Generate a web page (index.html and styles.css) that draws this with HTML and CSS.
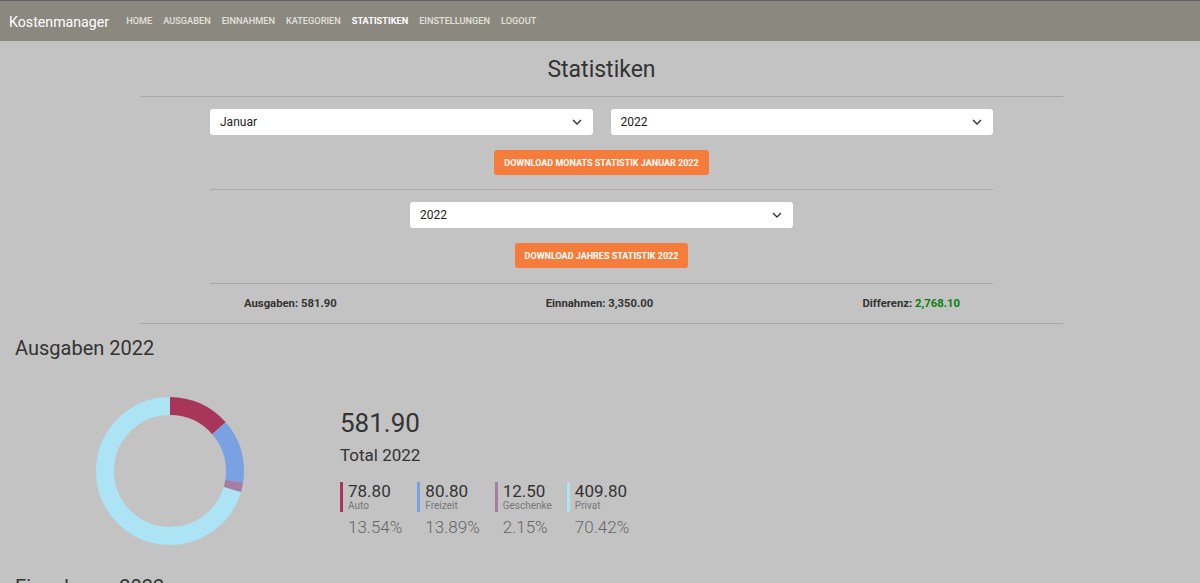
FILE: index.html
```html
<!DOCTYPE html>
<html lang="de">
<head>
<meta charset="utf-8">
<title>Kostenmanager - Statistiken</title>
<link rel="stylesheet" href="styles.css">
</head>
<body>
<nav class="navbar">
  <a class="brand" href="#">Kostenmanager</a>
  <ul class="nav">
    <li><a href="#">Home</a></li>
    <li><a href="#">Ausgaben</a></li>
    <li><a href="#">Einnahmen</a></li>
    <li><a href="#">Kategorien</a></li>
    <li><a class="active" href="#">Statistiken</a></li>
    <li><a href="#">Einstellungen</a></li>
    <li><a href="#">Logout</a></li>
  </ul>
</nav>
<main>
  <div class="container">
    <h1 class="title">Statistiken</h1>
    <div class="rule"></div>
    <div class="inner">
      <div class="select-pair">
        <div class="select"><span>Januar</span><svg class="chev" width="10" height="6" viewBox="0 0 10 6"><path d="M1 1l4 4 4-4" fill="none" stroke="#333" stroke-width="1.4"/></svg></div>
        <div class="select"><span>2022</span><svg class="chev" width="10" height="6" viewBox="0 0 10 6"><path d="M1 1l4 4 4-4" fill="none" stroke="#333" stroke-width="1.4"/></svg></div>
      </div>
      <div class="btn-row"><button class="btn">Download Monats Statistik Januar 2022</button></div>
      <div class="rule gap-top"></div>
      <div class="select-single">
        <div class="select"><span>2022</span><svg class="chev" width="10" height="6" viewBox="0 0 10 6"><path d="M1 1l4 4 4-4" fill="none" stroke="#333" stroke-width="1.4"/></svg></div>
      </div>
      <div class="btn-row"><button class="btn">Download Jahres Statistik 2022</button></div>
      <div class="rule gap-top2"></div>
      <div class="totals">
        <span>Ausgaben: 581.90</span>
        <span>Einnahmen: 3,350.00</span>
        <span>Differenz: <em class="pos">2,768.10</em></span>
      </div>
    </div>
    <div class="rule"></div>
  </div>

  <section class="chart-section">
    <h2 class="section-title">Ausgaben 2022</h2>
    <div class="chart-row">
      <svg class="donut" width="148" height="148" viewBox="0 0 148 148">
        <g transform="rotate(-90 74 74)" fill="none" stroke-width="18">
          <circle cx="74" cy="74" r="65" stroke="#a8365a" stroke-dasharray="55.30 353.11" stroke-dashoffset="0"/>
          <circle cx="74" cy="74" r="65" stroke="#7aa2e2" stroke-dasharray="56.73 351.68" stroke-dashoffset="-55.30"/>
          <circle cx="74" cy="74" r="65" stroke="#a47ea7" stroke-dasharray="8.78 399.63" stroke-dashoffset="-112.03"/>
          <circle cx="74" cy="74" r="65" stroke="#ace3f5" stroke-dasharray="287.60 120.81" stroke-dashoffset="-120.81"/>
        </g>
      </svg>
      <div class="info">
        <div class="big">581.90</div>
        <div class="sub">Total 2022</div>
        <div class="legend">
          <div class="item">
            <div class="head c-auto"><div class="val">78.80</div><div class="lbl">Auto</div></div>
            <div class="pct">13.54%</div>
          </div>
          <div class="item">
            <div class="head c-frei"><div class="val">80.80</div><div class="lbl">Freizeit</div></div>
            <div class="pct">13.89%</div>
          </div>
          <div class="item">
            <div class="head c-gesch"><div class="val">12.50</div><div class="lbl">Geschenke</div></div>
            <div class="pct">2.15%</div>
          </div>
          <div class="item">
            <div class="head c-priv"><div class="val">409.80</div><div class="lbl">Privat</div></div>
            <div class="pct">70.42%</div>
          </div>
        </div>
      </div>
    </div>
  </section>

  <section class="chart-section next">
    <h2 class="section-title">Einnahmen 2022</h2>
  </section>
</main>
</body>
</html>
```

FILE: styles.css
```css
html {
  scrollbar-width: none;
}
html::-webkit-scrollbar {
  width: 0;
  height: 0;
}
body {
  margin: 0;
  background: #c3c3c3;
  font-family: Roboto, "Liberation Sans", sans-serif;
  color: #333;
}
a {
  text-decoration: none;
}

/* navbar */
.navbar {
  height: 40px;
  border-top: 1px solid #5f5f5f;
  background: #8b8880;
  display: flex;
  align-items: center;
  padding: 0 9px;
}
.brand {
  color: #fff;
  font-size: 14.2px;
  line-height: 20px;
  margin-top: 1px;
}
.nav {
  list-style: none;
  margin: 0 0 0 17px;
  padding: 0;
  display: flex;
  gap: 11px;
}
.nav a {
  display: block;
  color: #e3e0da;
  font-size: 9.2px;
  font-weight: 500;
  text-transform: uppercase;
  line-height: 14px;
  margin-top: -1px;
}
.nav a.active {
  color: #fff;
  font-weight: 700;
}

/* container */
.container {
  width: 923px;
  margin-left: 140px;
}
.title {
  margin: 15px 0 12px;
  font-size: 23px;
  line-height: 28px;
  font-weight: 400;
  text-align: center;
  color: #333;
}
.rule {
  height: 1px;
  background: #a9a9a9;
}
.inner {
  margin: 0 70px;
}
.select-pair {
  margin-top: 12px;
  display: grid;
  grid-template-columns: 1fr 1fr;
  gap: 18px;
}
.select-single {
  margin-top: 12px;
  display: flex;
  justify-content: center;
}
.select-single .select {
  width: 383px;
}
.select {
  height: 26px;
  background: #fff;
  border-radius: 3px;
  box-sizing: border-box;
  padding: 0 11px 0 10px;
  display: flex;
  align-items: center;
  justify-content: space-between;
  font-size: 12px;
  color: #222;
}
.chev {
  display: block;
}
.btn-row {
  margin-top: 15px;
  display: flex;
  justify-content: center;
}
.btn {
  height: 25px;
  padding: 0 10px;
  border: none;
  border-radius: 3px;
  background: #f57c3a;
  color: #fff;
  font-family: Roboto, "Liberation Sans", sans-serif;
  font-size: 9px;
  font-weight: 700;
  text-transform: uppercase;
  letter-spacing: 0;
}
.gap-top {
  margin-top: 14px;
}
.gap-top2 {
  margin-top: 15px;
}
.totals {
  height: 39px;
  display: flex;
  align-items: center;
  justify-content: space-between;
  padding: 0 33px 0 34px;
  font-size: 11.3px;
  font-weight: 700;
  color: #333;
}
.pos {
  font-style: normal;
  color: #0b800b;
}

/* chart section */
.chart-section {
  padding: 0 15px;
}
.section-title {
  margin: 12px 0 0;
  font-size: 20px;
  line-height: 24px;
  font-weight: 400;
  color: #333;
}
.chart-row {
  margin-top: 37px;
  display: flex;
  align-items: flex-start;
}
.donut {
  display: block;
  margin-left: 81px;
}
.info {
  margin-left: 96px;
  padding-top: 11px;
}
.big {
  font-size: 26px;
  line-height: 30px;
  color: #333;
}
.sub {
  margin-top: 7px;
  font-size: 17px;
  line-height: 20px;
  color: #333;
}
.legend {
  margin-top: 17px;
  display: flex;
  gap: 15px;
}
.head {
  border-left: 3px solid;
  padding-left: 5px;
}
.c-auto { border-color: #a8365a; }
.c-frei { border-color: #7aa2e2; }
.c-gesch { border-color: #a47ea7; }
.c-priv { border-color: #ace3f5; }
.val {
  font-size: 17px;
  line-height: 18px;
  color: #333;
}
.lbl {
  font-size: 10px;
  line-height: 12px;
  color: #777;
}
.pct {
  margin-top: 5px;
  padding-left: 8px;
  font-size: 17px;
  line-height: 20px;
  font-weight: 300;
  color: #666;
}
.next .section-title {
  margin-top: 30px;
}
```
